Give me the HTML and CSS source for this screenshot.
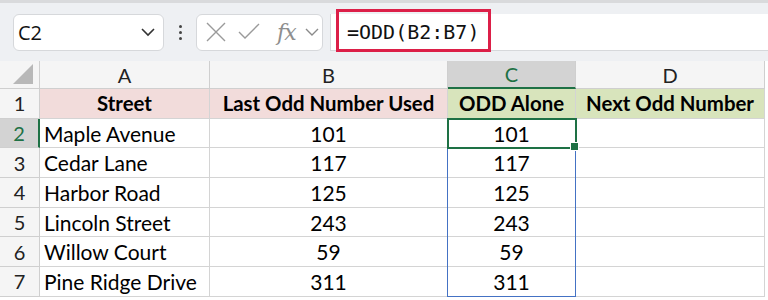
FILE: index.html
```html
<!DOCTYPE html>
<html>
<head>
  <title>ODD function</title>
  <link rel="stylesheet" href="styles.css">
</head>
<body>
<div class="app">
  <div class="toolbar">
    <div class="name-box">
      <span class="name-text">C2</span>
      <svg class="chev" width="16" height="10" viewBox="0 0 16 10"><path d="M2 2 L8 8 L14 2" fill="none" stroke="#333" stroke-width="1.6"/></svg>
    </div>
    <div class="dots"><i></i><i></i><i></i></div>
    <div class="fx-box">
      <svg width="22" height="22" viewBox="0 0 22 22"><path d="M2 2 L20 20 M20 2 L2 20" stroke="#9a9a9a" stroke-width="1.4" fill="none"/></svg>
      <svg width="22" height="18" viewBox="0 0 22 18"><path d="M1 9 L7 15 L21 1" stroke="#9a9a9a" stroke-width="1.4" fill="none"/></svg>
      <span class="fx">fx</span>
      <svg width="16" height="10" viewBox="0 0 16 10"><path d="M2 2 L8 8 L14 2" fill="none" stroke="#8a8a8a" stroke-width="1.4"/></svg>
    </div>
    <div class="formula">
      <span class="formula-text">=ODD(B2:B7)</span>
      <div class="callout"></div>
    </div>
  </div>

  <div class="sheet">
    <div class="grid">
      <div class="hd corner"><svg width="22" height="22" viewBox="0 0 22 22"><path d="M21 1 L21 21 L1 21 Z" fill="#b8b8b8"/></svg></div>
      <div class="hd col">A</div>
      <div class="hd col">B</div>
      <div class="hd col sel-col">C</div>
      <div class="hd col">D</div>

      <div class="hd row">1</div>
      <div class="cell head pink mid">Street</div>
      <div class="cell head pink mid">Last Odd Number Used</div>
      <div class="cell head green mid">ODD Alone</div>
      <div class="cell head green mid">Next Odd Number</div>

      <div class="hd row sel-row">2</div>
      <div class="cell">Maple Avenue</div>
      <div class="cell mid">101</div>
      <div class="cell mid active">101<span class="handle"></span></div>
      <div class="cell"></div>

      <div class="hd row">3</div>
      <div class="cell">Cedar Lane</div>
      <div class="cell mid">117</div>
      <div class="cell mid">117</div>
      <div class="cell"></div>

      <div class="hd row">4</div>
      <div class="cell">Harbor Road</div>
      <div class="cell mid">125</div>
      <div class="cell mid">125</div>
      <div class="cell"></div>

      <div class="hd row">5</div>
      <div class="cell">Lincoln Street</div>
      <div class="cell mid">243</div>
      <div class="cell mid">243</div>
      <div class="cell"></div>

      <div class="hd row">6</div>
      <div class="cell">Willow Court</div>
      <div class="cell mid">59</div>
      <div class="cell mid">59</div>
      <div class="cell"></div>

      <div class="hd row">7</div>
      <div class="cell">Pine Ridge Drive</div>
      <div class="cell mid">311</div>
      <div class="cell mid">311</div>
      <div class="cell"></div>
    </div>
    <div class="range"></div>
  </div>
</div>
</body>
</html>
```

FILE: styles.css
```css
body {
  margin: 0;
  background: #fff;
  font-family: Lato, "Open Sans", sans-serif;
}
.app {
  width: 768px;
  height: 300px;
  overflow: hidden;
}
.toolbar {
  height: 58px;
  border-top: 3px solid #d9dadc;
  background: #eef0f3;
  display: flex;
  align-items: center;
  padding-left: 13px;
}
.name-box {
  width: 151px;
  height: 37px;
  background: #fff;
  border: 1px solid #d6d8db;
  border-radius: 6px;
  display: flex;
  align-items: center;
  justify-content: space-between;
  padding: 0 7px 0 4px;
  box-sizing: border-box;
}
.name-text {
  font-family: "Open Sans", sans-serif;
  font-size: 20px;
  color: #111;
}
.dots {
  width: 32px;
  display: flex;
  flex-direction: column;
  align-items: center;
  gap: 3px;
}
.dots i {
  width: 3px;
  height: 3px;
  background: #444;
  border-radius: 50%;
}
.fx-box {
  width: 127px;
  height: 37px;
  box-sizing: border-box;
  background: #fff;
  border: 1px solid #d6d8db;
  border-radius: 6px;
  display: flex;
  align-items: center;
  padding-left: 8px;
  gap: 11px;
}
.fx {
  font-family: "DejaVu Serif", "Liberation Serif", serif;
  font-style: italic;
  font-size: 22px;
  color: #8e8e8e;
  letter-spacing: -1px;
  margin-left: 6px;
  margin-right: -3px;
}
.formula {
  position: relative;
  flex: 1;
  margin-left: 7px;
  height: 37px;
  background: #fff;
  border-left: 1px solid #d6d8db;
  border-bottom: 1px solid #d6d8db;
  box-sizing: border-box;
  display: flex;
  align-items: center;
  padding-left: 16px;
}
.formula-text {
  font-family: "DejaVu Sans Mono", "Liberation Mono", monospace;
  font-size: 20px;
  color: #111;
}
.callout {
  position: absolute;
  left: 5px;
  top: -5px;
  width: 155px;
  height: 43px;
  border: 3px solid #dc1f48;
  box-sizing: border-box;
}
.sheet {
  position: relative;
}
.grid {
  display: grid;
  grid-template-columns: 40px 170px 238px 128px 189px;
  grid-template-rows: 28px repeat(7, 29.7px);
  font-size: 21px;
  color: #000;
}
.hd {
  background: #f5f5f5;
  border-right: 1px solid #cfcfcf;
  border-bottom: 1px solid #cfcfcf;
  display: flex;
  align-items: center;
  justify-content: center;
  box-sizing: border-box;
  color: #222;
  font-size: 20px;
}
.corner {
  align-items: flex-end;
  justify-content: flex-end;
  padding: 0 5px 3px 0;
}
.sel-col {
  background: #d3d3d3;
  color: #1e7145;
  border-bottom: 2px solid #1e7145;
}
.sel-row {
  background: #d3d3d3;
  color: #1e7145;
  border-right: 2px solid #1e7145;
}
.cell {
  border-right: 1px solid #d4d4d4;
  border-bottom: 1px solid #d4d4d4;
  box-sizing: border-box;
  display: flex;
  align-items: center;
  padding-left: 4px;
  white-space: nowrap;
}
.mid {
  justify-content: center;
  padding-left: 0;
}
.head {
  font-weight: bold;
  font-size: 20.4px;
}
.pink {
  background: #f2dcdb;
}
.green {
  background: #d8e4bc;
}
.active {
  position: relative;
  z-index: 2;
  outline: 2px solid #1e7145;
  outline-offset: -1px;
}
.handle {
  position: absolute;
  right: -4px;
  bottom: -4px;
  width: 7px;
  height: 7px;
  background: #1e7145;
  border: 1px solid #fff;
}
.range {
  position: absolute;
  left: 447px;
  top: 57px;
  width: 129px;
  height: 179px;
  border: 1.5px solid #4472c4;
  box-sizing: border-box;
  pointer-events: none;
}
```
